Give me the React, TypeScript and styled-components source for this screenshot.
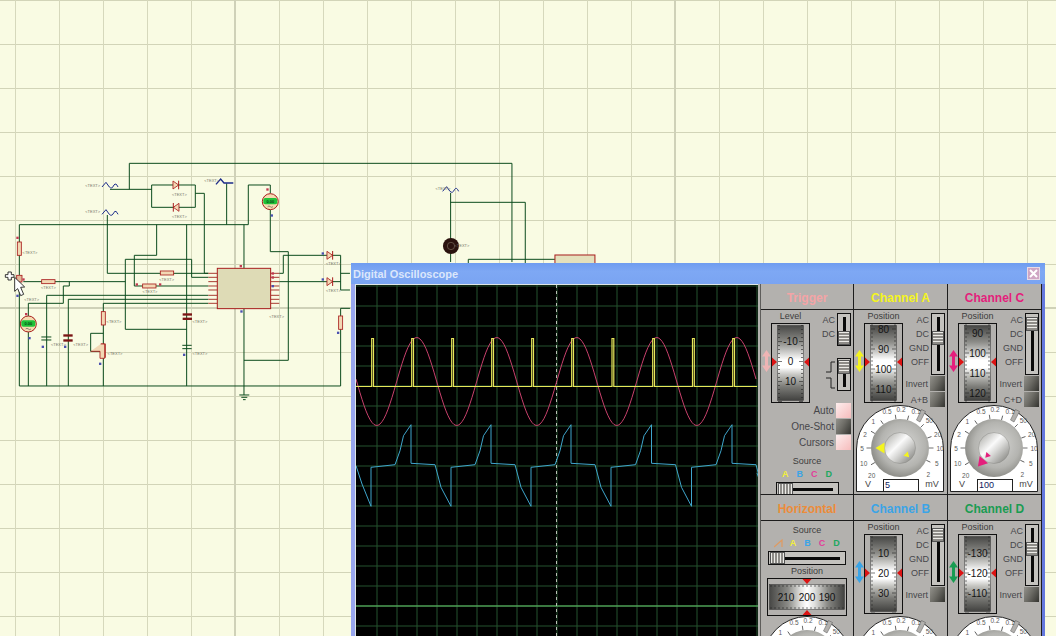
import React from 'react';
import styled, { createGlobalStyle } from 'styled-components';

// === WAVES (page coordinates) ===
const SCREEN_LEFT = 356;
const SCREEN_RIGHT = 757;

const sineWave = () => {
    const pts: string[] = [];
    for (let x = SCREEN_LEFT; x <= SCREEN_RIGHT; x += 2) {
        const y = 382.5 + 44 * Math.cos(((x - 376.7) * 2 * Math.PI) / 80);
        pts.push(`${x},${y.toFixed(1)}`);
    }
    return pts.join(' ');
};

const pulseWave = () => {
    const starts = [371.7, 411.7, 451.7, 491.7, 531.7, 571.7, 612, 652.7, 692.5, 732.7];
    let d = `M${SCREEN_LEFT} 387.5`;
    starts.forEach((x) => {
        d += ` H${x} V339.5 H${x + 1.8} V387.5`;
    });
    return `${d} H${SCREEN_RIGHT}`;
};

const blueWave = () => {
    let d = 'M356 466.7 L362 485 L371 507.3';
    [371, 451, 531, 611.5, 692].forEach((x) => {
        d += ` V468.3 L${x + 24} 465.7 L${x + 29} 451.7 L${x + 32.5} 436.7 L${x + 40} 425.7 V464.3 L${x + 64} 465.7 L${x + 70} 488.3 L${x + 80} 507.3`;
    });
    return d.slice(0, d.lastIndexOf(' L')) + ' L757 474';
};

const range = (from: number, to: number, step: number) => {
    const out: number[] = [];
    for (let v = from; v <= to; v += step) out.push(v);
    return out;
};

// === STYLED COMPONENTS ===
const GlobalStyle = createGlobalStyle`
    html, body { margin: 0; padding: 0; background: #f9fbe3; overflow: hidden; }
    body { font-family: "Liberation Sans", Arial, sans-serif; }
`;
const Desktop = styled.div`
    position: relative; width: 1056px; height: 636px; overflow: hidden;
    background-color: #f9fbe3;
    background-image:
        linear-gradient(#cfd1b8, #cfd1b8), linear-gradient(#cfd1b8, #cfd1b8), linear-gradient(#cfd1b8, #cfd1b8),
        linear-gradient(to right, #d6d8bc 1px, transparent 1px),
        linear-gradient(to bottom, #d2d4b8 1px, transparent 1px);
    background-size: 2px 100%, 2px 100%, 100% 2px, 44px 44px, 44px 44px;
    background-position: 234px 0, 674px 0, 0 307px, 15px 0, 0 0;
    background-repeat: no-repeat, no-repeat, no-repeat, repeat, repeat;
`;
const Schematic = styled.svg` display: block; `;
const Window = styled.div`
    position: absolute; left: 351px; top: 263px; width: 694px; height: 380px;
    display: flex; flex-direction: column;
`;
const TitleBar = styled.div`
    height: 21px; flex: none; display: flex; align-items: center; justify-content: space-between;
    padding: 0 5px 0 2px; box-sizing: border-box;
    background: linear-gradient(#6f9cf0, #7ea8f4 40%, #7aa4f2);
`;
const Title = styled.span` font-size: 11px; font-weight: 700; color: #dbe6fb; `;
const CloseButton = styled.div`
    width: 11px; height: 11px; background: #cfa6c4; border: 1px solid #e9dbe6;
    display: flex; align-items: center; justify-content: center;
`;
const WindowBody = styled.div`
    flex: 1; display: flex; background: #b3b1ae; min-height: 0;
    border-left: 4px solid #98a6ee; border-right: 3px solid #6478de;
`;
const Screen = styled.svg`
    display: block; width: 403px; height: 357px; flex: none; margin-right: 2px;
    background: #000; border-top: 1px solid #dfe6e6; border-left: 1px solid #dfe6e6; box-sizing: border-box;
`;
const Controls = styled.div`
    width: 282px; flex: none; display: grid;
    grid-template-columns: repeat(3, 94px); grid-template-rows: 211px 1fr;
`;
const Section = styled.section`
    display: flex; flex-direction: column; box-sizing: border-box; min-width: 0; overflow: hidden;
    border-right: 1px solid #1d1d1d; border-bottom: 1px solid #1d1d1d;
    &:nth-child(3n + 1) { border-left: 1px solid #5e5d5b; }
`;
const SectionHeader = styled.h3<{ $color: string }>`
    margin: 0; height: 26px; flex: none; box-sizing: border-box; border-bottom: 1px solid #1d1d1d;
    padding-top: 2px;
    display: flex; align-items: center; justify-content: center;
    font-size: 12px; font-weight: 700; color: ${(p) => p.$color};
`;
const SectionBody = styled.div` flex: 1; display: flex; flex-direction: column; `;
const TopRow = styled.div<{ $height: number }>`
    display: flex; height: ${(p) => p.$height}px; flex: none;
`;
const ArrowSlot = styled.div<{ $width: number }>`
    width: ${(p) => p.$width}px; flex: none; display: flex; justify-content: center; padding-top: 40px;
`;
const DrumColumn = styled.div` width: 39px; flex: none; `;
const Caption = styled.div`
    height: 13px; line-height: 13px; font-size: 9px; text-align: center; color: #3c3c3c;
`;
const RightColumn = styled.div` flex: 1; display: flex; flex-direction: column; align-items: flex-end; padding: 3px 2px 0 0; `;
const ModeRow = styled.div` display: flex; gap: 2px; `;
const ModeLabels = styled.div` display: flex; flex-direction: column; align-items: flex-end; `;
const ModeLabel = styled.span`
    height: 14px; line-height: 14px; font-size: 9px; color: #46464a;
`;
const SliderFrame = styled.div<{ $height: number }>`
    position: relative; width: 14px; height: ${(p) => p.$height}px; box-sizing: border-box;
    border: 1px solid #111; background: #c4c2be; display: flex; justify-content: center;
    &::before { content: ''; width: 3px; margin: 3px 0; background: #0a0a0a; }
`;
const SliderThumb = styled.div<{ $top: number }>`
    position: absolute; left: 0; top: ${(p) => p.$top}px; width: 12px; height: 14px; box-sizing: border-box;
    border: 1px solid #555;
    background: repeating-linear-gradient(#ecebe7 0 1px, #8e8c88 1px 3px);
`;
const WideSlider = styled.div<{ $width: number }>`
    position: relative; width: ${(p) => p.$width}px; height: 14px; box-sizing: border-box;
    border: 1px solid #111; background: #c4c2be; display: flex; align-items: center;
    &::before { content: ''; flex: 1; height: 3px; margin: 0 5px; background: #0a0a0a; }
`;
const WideThumb = styled.div`
    position: absolute; left: 1px; top: 0; width: 15px; height: 12px; box-sizing: border-box;
    border: 1px solid #555;
    background: repeating-linear-gradient(90deg, #ecebe7 0 1px, #8e8c88 1px 3px);
`;
const ButtonRow = styled.div<{ $gap?: number }>`
    display: flex; align-items: center; justify-content: flex-end; gap: 2px;
    margin-top: ${(p) => p.$gap ?? 1}px; height: 15px;
`;
const ButtonLabel = styled.span` font-size: 9px; color: #46464a; `;
const ActionLabel = styled.span` font-size: 10px; color: #46464a; `;
const SquareButton = styled.div<{ $lit?: boolean }>`
    width: 15px; height: 15px; flex: none;
    background: ${(p) =>
        p.$lit
            ? 'linear-gradient(135deg, #fdeeee, #f6bcbc)'
            : 'linear-gradient(120deg, #93928c, #6d6c66 45%, #33332f)'};
`;
const SideStack = styled.div` display: flex; flex-direction: column; padding-right: 2px; `;
const Stepper = styled.div` display: flex; align-items: center; gap: 1px; margin-top: 12px; `;
const Centered = styled.div<{ $top?: number }>`
    display: flex; flex-direction: column; align-items: center; margin-top: ${(p) => p.$top ?? 0}px;
`;
const SourceLetters = styled.div` display: flex; align-items: center; gap: 6.5px; height: 10px; margin: 1px 0 3px; `;
const SourceLetter = styled.span<{ $color: string }>` font-size: 9px; font-weight: 700; color: ${(p) => p.$color}; width: 8px; text-align: center; `;
const DialWrap = styled.div`
    position: relative; width: 88px; height: 87px; flex: none; margin-left: 2px;
`;
const DialInput = styled.div`
    position: absolute; left: 27px; bottom: 0; width: 36px; height: 13px; box-sizing: border-box;
    background: #fff; border: 1px solid #222; padding-left: 1px;
    font-size: 9px; line-height: 11px; color: #101a60;
`;

// === DRAWN PARTS ===
const DoubleArrow: React.FC<{ color: string }> = ({ color }) => (
    <svg width="9" height="22" viewBox="0 0 9 22">
        <path d="M4.5 0 9 6.5H6V15.5H9L4.5 22 0 15.5H3V6.5H0Z" fill={color} />
    </svg>
);

const Drum: React.FC<{ labels: string[]; first: number; id: string }> = ({ labels, first, id }) => {
    const ticks = range(first - 16, 40, 4).filter((y) => y > -38);
    return (
        <svg width="39" height="80" viewBox="0 0 39 80" style={{ display: 'block' }}>
            <defs>
                <linearGradient id={id} x1="0" y1="0" x2="0" y2="1">
                    <stop offset="0" stopColor="#474745" />
                    <stop offset="0.22" stopColor="#8c8c88" />
                    <stop offset="0.38" stopColor="#d8d8d6" />
                    <stop offset="0.46" stopColor="#fff" />
                    <stop offset="0.56" stopColor="#fff" />
                    <stop offset="0.66" stopColor="#c4c4c0" />
                    <stop offset="0.82" stopColor="#7a7a76" />
                    <stop offset="1" stopColor="#41413f" />
                </linearGradient>
            </defs>
            <rect x="0.5" y="0.5" width="38" height="79" fill="#b3b1ae" stroke="#111" />
            <rect x="6.5" y="2.5" width="26" height="75" fill={`url(#${id})`} stroke="#333" strokeWidth="0.5" />
            {ticks.map((t) => {
                const major = (t - first) % 20 === 0;
                return (
                    <g key={t} stroke="#222" strokeWidth="0.6">
                        <line x1="7" x2={major ? 11 : 9} y1={39 + t} y2={39 + t} />
                        <line x1={major ? 28 : 30} x2="32" y1={39 + t} y2={39 + t} />
                    </g>
                );
            })}
            {labels.map((l, i) => (
                <text key={l} x="19.5" y={39 + first + i * 20 + 3.5} fontSize="10" textAnchor="middle" fill="#151515"
                    fontFamily="Liberation Sans, sans-serif">{l}</text>
            ))}
            <path d="M1 34.5 6 39 1 43.5Z M38 34.5 33 39 38 43.5Z" fill="#dc1414" />
        </svg>
    );
};

const WideDrum: React.FC = () => (
    <svg width="80" height="38" viewBox="0 0 80 38" style={{ display: 'block' }}>
        <defs>
            <linearGradient id="wideDrum" x1="0" y1="0" x2="1" y2="0">
                <stop offset="0" stopColor="#474745" />
                <stop offset="0.25" stopColor="#8c8c88" />
                <stop offset="0.42" stopColor="#e4e4e2" />
                <stop offset="0.5" stopColor="#fff" />
                <stop offset="0.6" stopColor="#e0e0de" />
                <stop offset="0.78" stopColor="#888884" />
                <stop offset="1" stopColor="#41413f" />
            </linearGradient>
        </defs>
        <rect x="0.5" y="0.5" width="79" height="37" fill="#b3b1ae" stroke="#111" />
        <rect x="2.5" y="6.5" width="75" height="25" fill="url(#wideDrum)" stroke="#333" strokeWidth="0.5" />
        {range(4, 76, 4).map((x) => (
            <g key={x} stroke="#222" strokeWidth="0.6">
                <line x1={x} x2={x} y1="7" y2="9" />
                <line x1={x} x2={x} y1="29" y2="31" />
            </g>
        ))}
        {[['210', 19], ['200', 40], ['190', 60]].map(([l, x]) => (
            <text key={l} x={x} y="23" fontSize="10" textAnchor="middle" fill="#111"
                fontFamily="Liberation Sans, sans-serif">{l}</text>
        ))}
        <path d="M35.5 1 44.5 1 40 6Z M35.5 37 44.5 37 40 32Z" fill="#dc1414" />
    </svg>
);

const DIAL_MARKS: [string, number, number][] = [
    ['0.5', -13, -36.7], ['0.2', 1, -39], ['0.1', 16, -36.7], ['50', 29.3, -27.3], ['20', 37.7, -13.3],
    ['10', 40, 0], ['5', 36.7, 15], ['2', 28.3, 26.7], ['1', -26.7, -26.7], ['2', -35, -13.3],
    ['5', -38, 0], ['10', -36.3, 15], ['20', -28.3, 27.3],
];
const DIAL_TICKS = [-120, -90, -60, -35, -8, 15, 45, 70, 90, 115];

// angles run clockwise from straight up
const Dial: React.FC<{ id: string; color?: string; angle?: number; fine?: number; value?: string }> = ({
    id, color, angle = 270, fine = 135, value,
}) => (
    <DialWrap>
        <svg width="88" height="87" viewBox="0 0 88 87" style={{ display: 'block' }} fontFamily="Liberation Sans, sans-serif">
            <defs>
                <radialGradient id={`${id}-body`} cx="0.55" cy="0.45" r="0.6">
                    <stop offset="0" stopColor="#d8d8d6" />
                    <stop offset="0.65" stopColor="#b4b4b0" />
                    <stop offset="1" stopColor="#84847f" />
                </radialGradient>
                <linearGradient id={`${id}-cap`} x1="0.1" y1="0.1" x2="0.9" y2="0.9">
                    <stop offset="0" stopColor="#b8b8b4" />
                    <stop offset="0.4" stopColor="#fafafa" />
                    <stop offset="0.6" stopColor="#d8d8d6" />
                    <stop offset="1" stopColor="#8c8c88" />
                </linearGradient>
            </defs>
            <path d="M0.5 86.5V44A43.5 43.5 0 0 1 87.5 44V86.5Z" fill="#fff" stroke="#222" />
            <path d="M65.5 4.5 69.5 6.5 64 17 60.5 15Z" fill="#b3b1ae" stroke="#555" strokeWidth="0.5" />
            <line x1="27.5" y1="74" x2="27.5" y2="86" stroke="#222" />
            <line x1="62.5" y1="74" x2="62.5" y2="86" stroke="#222" />
            {DIAL_TICKS.map((a) => (
                <line key={a} x1="44" x2="44" y1="9.5" y2="14" stroke="#333" strokeWidth="0.7" transform={`rotate(${a} 44 43)`} />
            ))}
            {DIAL_MARKS.map(([l, dx, dy]) => (
                <text key={`${l}${dx}`} x={44 + dx} y={43 + dy + 2.5} fontSize="6.5" textAnchor="middle" fill="#5a5a5a">{l}</text>
            ))}
            <text x="12" y="82" fontSize="9" textAnchor="middle" fill="#444">V</text>
            <text x="76" y="82" fontSize="9" textAnchor="middle" fill="#444">mV</text>
            <circle cx="44" cy="43" r="29" fill={`url(#${id}-body)`} />
            <circle cx="44" cy="43" r="15.5" fill={`url(#${id}-cap)`} stroke="#8a8a86" strokeWidth="0.5" />
            {color && (
                <>
                    <path d="M44 18.5 49.5 27.5H38.5Z" fill={color} transform={`rotate(${angle} 44 43)`} />
                    <path d="M44 30 47 35H41Z" fill={color} transform={`rotate(${fine} 44 43)`} />
                </>
            )}
        </svg>
        {value && <DialInput>{value}</DialInput>}
    </DialWrap>
);

// === PANELS ===
type ChannelProps = {
    title: string;
    color: string;
    labels: string[];
    first: number;
    stop: number;
    buttons: string[];
    id: string;
    angle?: number;
    fine?: number;
    value?: string;
};

const Channel: React.FC<ChannelProps> = ({ title, color, labels, first, stop, buttons, id, angle, fine, value }) => (
    <Section>
        <SectionHeader $color={color}>{title}</SectionHeader>
        <SectionBody>
            <TopRow $height={95}>
                <ArrowSlot $width={10}><DoubleArrow color={color} /></ArrowSlot>
                <DrumColumn>
                    <Caption>Position</Caption>
                    <Drum id={id} labels={labels} first={first} />
                </DrumColumn>
                <RightColumn>
                    <ModeRow>
                        <ModeLabels>
                            {['AC', 'DC', 'GND', 'OFF'].map((m) => <ModeLabel key={m}>{m}</ModeLabel>)}
                        </ModeLabels>
                        <SliderFrame $height={62}><SliderThumb $top={3 + stop * 14} /></SliderFrame>
                    </ModeRow>
                    {buttons.map((b) => (
                        <ButtonRow key={b}>
                            <ButtonLabel>{b}</ButtonLabel>
                            <SquareButton />
                        </ButtonRow>
                    ))}
                </RightColumn>
            </TopRow>
            <Dial id={`${id}-dial`} color={value ? color : undefined} angle={angle} fine={fine} value={value} />
        </SectionBody>
    </Section>
);

const TriggerPanel: React.FC = () => (
    <Section>
        <SectionHeader $color="#f4a4a6">Trigger</SectionHeader>
        <SectionBody>
            <TopRow $height={93}>
                <ArrowSlot $width={10}><DoubleArrow color="#eeb4b4" /></ArrowSlot>
                <DrumColumn>
                    <Caption>Level</Caption>
                    <Drum id="level" labels={['-10', '0', '10']} first={-20.5} />
                </DrumColumn>
                <RightColumn>
                    <ModeRow>
                        <ModeLabels>
                            <ModeLabel>AC</ModeLabel>
                            <ModeLabel>DC</ModeLabel>
                        </ModeLabels>
                        <SliderFrame $height={33}><SliderThumb $top={17} /></SliderFrame>
                    </ModeRow>
                    <Stepper>
                        <svg width="12" height="28" viewBox="0 0 12 28">
                            <path d="M11 1H7V11H2M11 27H7V17H2" fill="none" stroke="#222" strokeWidth="1" />
                        </svg>
                        <SliderFrame $height={33}><SliderThumb $top={1} /></SliderFrame>
                    </Stepper>
                </RightColumn>
            </TopRow>
            <SideStack>
                <ButtonRow $gap={0}><ActionLabel>Auto</ActionLabel><SquareButton $lit /></ButtonRow>
                <ButtonRow><ActionLabel>One-Shot</ActionLabel><SquareButton /></ButtonRow>
                <ButtonRow><ActionLabel>Cursors</ActionLabel><SquareButton $lit /></ButtonRow>
            </SideStack>
            <Centered $top={5}>
                <Caption>Source</Caption>
                <SourceLetters>
                    <SourceLetter $color="#f2ee3c">A</SourceLetter>
                    <SourceLetter $color="#3ba4e6">B</SourceLetter>
                    <SourceLetter $color="#e0409a">C</SourceLetter>
                    <SourceLetter $color="#20a860">D</SourceLetter>
                </SourceLetters>
                <WideSlider $width={63}><WideThumb /></WideSlider>
            </Centered>
        </SectionBody>
    </Section>
);

const HorizontalPanel: React.FC = () => (
    <Section>
        <SectionHeader $color="#ec8c3a">Horizontal</SectionHeader>
        <SectionBody>
            <Centered $top={3}>
                <Caption>Source</Caption>
                <SourceLetters>
                    <svg width="9" height="9" viewBox="0 0 9 9">
                        <path d="M0 8 8 1V8" fill="none" stroke="#e09a60" strokeWidth="1.2" />
                    </svg>
                    <SourceLetter $color="#f2ee3c">A</SourceLetter>
                    <SourceLetter $color="#3ba4e6">B</SourceLetter>
                    <SourceLetter $color="#e0409a">C</SourceLetter>
                    <SourceLetter $color="#20a860">D</SourceLetter>
                </SourceLetters>
                <WideSlider $width={78}><WideThumb /></WideSlider>
                <Caption>Position</Caption>
                <WideDrum />
            </Centered>
            <Dial id="timebase" />
        </SectionBody>
    </Section>
);

const Source: React.FC<{ x: number; y: number; dc?: boolean }> = ({ x, y, dc }) => (
    <path
        d={dc ? `M${x - 24} ${y + 8}L${x - 10} ${y - 8}L${x} ${y + 4}H${x + 28}` : `M${x - 24} ${y + 6}L${x - 12} ${y - 8}L${x - 2} ${y + 6}Q${x + 6} ${y + 14} ${x + 12} ${y}Q${x + 18} ${y - 8} ${x + 24} ${y + 6}`}
        fill="none" stroke="#1a2a8a" strokeWidth={dc ? 4 : 3}
    />
);

// Traced from a 3x view, hence the scale on the group
const WIRES = [
    'M388 118V40H1536V336', 'M330 118H455', 'M455 105H586V172H455Z', 'M586 130H613V370H625',
    'M322 195V370H625', 'M58 224H745V105H811V130', 'M732 224V355', 'M58 224V375', 'M58 395V708H1022V475H1050',
    'M470 224V316H403V408H625', 'M560 224V708', 'M680 100V224', 'M376 328H575V382H625', 'M376 328V538H560',
    'M70 395H376', 'M208 395V408H190V460H85V708', 'M140 436H625', 'M140 436V708', 'M205 448H625', 'M205 448V708',
    'M310 460H625', 'M310 460V708', 'M272 550H310', 'M272 550V604H300', 'M838 370H850V316H1022V420H1050',
    'M838 395H1022', 'M1022 370H1050', 'M811 180V305H865V631H732', 'M732 476V735',
    'M1352 129V336', 'M1352 157H1576V340', 'M1405 345V328H1665',
];
const PIN_ROWS = [370, 382, 395, 408, 420, 436, 448, 460];
const RESISTORS_H = [[145, 395], [501, 369], [448, 408]];
const RESISTORS_V = [[58, 296], [310, 505], [1022, 518], [310, 602]];
const DIODES = [[528, 105, 1], [528, 172, -1], [990, 316, 1], [990, 395, 1]];
const TEXT_TAGS = [
    [278, 110], [278, 188], [635, 95], [538, 137], [538, 203], [90, 313], [145, 418], [95, 452], [500, 392],
    [450, 430], [342, 520], [175, 587], [242, 587], [345, 614], [600, 520], [600, 614], [830, 503], [1000, 346],
    [1000, 427], [1329, 120], [1386, 291],
];
const RED_PINS = [[52, 263], [70, 388], [410, 403], [480, 403], [818, 382], [818, 370], [802, 118], [78, 492], [722, 348]];
const BLUE_PINS = [[52, 437], [128, 590], [195, 590], [300, 641], [552, 614], [88, 564], [815, 196], [818, 408], [724, 484], [968, 310], [968, 388], [1014, 548]];

const Circuit: React.FC = () => (
    <Schematic width="1056" height="636" viewBox="0 0 1056 636">
        <g transform="translate(0 150) scale(0.3333)" fontFamily="Liberation Sans, sans-serif">
            <g fill="none" stroke="#0b4a1c" strokeWidth="3">
                {WIRES.map((d) => <path key={d} d={d} />)}
            </g>
            <g stroke="#a83a30" strokeWidth="3">
                {PIN_ROWS.map((y) => (
                    <g key={y}>
                        <line x1="625" x2="652" y1={y} y2={y} />
                        <line x1="812" x2="838" y1={y} y2={y} />
                    </g>
                ))}
            </g>
            <rect x="652" y="355" width="160" height="121" fill="#dedbb6" stroke="#a81c1c" strokeWidth="3" />
            <rect x="1665" y="315" width="120" height="40" fill="#e4e0bc" stroke="#a81c1c" strokeWidth="3" />
            {RESISTORS_H.map(([x, y]) => <rect key={x} x={x - 20} y={y - 6} width="40" height="12" fill="#f2d8b4" stroke="#a81c1c" strokeWidth="2.5" />)}
            {RESISTORS_V.map(([x, y]) => <rect key={y} x={x - 6} y={y - 20} width="12" height="40" fill="#f2d8b4" stroke="#a81c1c" strokeWidth="2.5" />)}
            {DIODES.map(([x, y, dir]) => (
                <g key={`${x}${y}`} transform={`translate(${x} ${y}) scale(${dir} 1)`}>
                    <path d="M-9 -12V12L8 0Z" fill="#f2d8b4" stroke="#a81c1c" strokeWidth="2.5" />
                    <line x1="8" x2="8" y1="-13" y2="13" stroke="#a81c1c" strokeWidth="3" />
                </g>
            ))}
            {[[811, 155], [85, 522]].map(([x, y]) => (
                <g key={x}>
                    <circle cx={x} cy={y} r="24" fill="#f4dcb0" stroke="#a81c1c" strokeWidth="3" />
                    <rect x={x - 21} y={y - 11} width="42" height="19" rx="6" fill="#1fc238" />
                    <text x={x} y={y + 3} fontSize="12" fontWeight="700" textAnchor="middle" fill="#0a4a16">0.00</text>
                    <path d={`M${x - 8} ${y + 15}q4 -4 8 0t8 0`} fill="none" stroke="#555" strokeWidth="2" />
                </g>
            ))}
            <g fill="#7a1414">
                <rect x="548" y="490" width="28" height="7" />
                <rect x="548" y="503" width="28" height="7" />
                <rect x="190" y="553" width="28" height="7" />
                <rect x="190" y="568" width="28" height="7" />
            </g>
            <g stroke="#0b4a1c" strokeWidth="3">
                <line x1="124" x2="154" y1="561" y2="561" />
                <line x1="124" x2="154" y1="570" y2="570" />
                <line x1="547" x2="575" y1="586" y2="586" />
                <line x1="547" x2="575" y1="596" y2="596" />
                <line x1="718" x2="748" y1="735" y2="735" />
                <line x1="724" x2="742" y1="742" y2="742" />
                <line x1="729" x2="737" y1="749" y2="749" />
            </g>
            <path d="M272 604H300V625H314V582H302" fill="#f2d8b4" stroke="#a81c1c" strokeWidth="2.5" />
            <rect x="50" y="376" width="16" height="20" fill="#e2b89a" stroke="#a81c1c" strokeWidth="2.5" />
            <Source x={330} y={105} />
            <Source x={330} y={187} />
            <Source x={672} y={95} dc />
            <Source x={1352} y={118} />
            <circle cx="1353" cy="288" r="24" fill="#2a120e" />
            <circle cx="1353" cy="288" r="11" fill="none" stroke="#7a6a5a" strokeWidth="2" />
            {RED_PINS.map(([x, y]) => <rect key={`${x}${y}`} x={x - 3} y={y - 3} width="7" height="7" fill="#c03a50" />)}
            {BLUE_PINS.map(([x, y]) => <rect key={`${x}${y}`} x={x - 3} y={y - 3} width="7" height="7" fill="#4a50b0" />)}
            {TEXT_TAGS.map(([x, y]) => (
                <text key={`${x}${y}`} x={x} y={y} fontSize="12" textAnchor="middle" fill="#77776a">{'<TEXT>'}</text>
            ))}
            {/* pointer */}
            <path d="M24 366h10v8h8v8h-8v8H24v-8H16v-8h8Z" fill="#fff" stroke="#111" strokeWidth="2.5" />
            <path d="M44 382V424L53 416 62 437 71 433 62 412 74 411Z" fill="#fff" stroke="#111" strokeWidth="2.5" />
        </g>
    </Schematic>
);

const Scope: React.FC = () => (
    <Screen viewBox="356 286 402 356" preserveAspectRatio="xMinYMin">
        <g stroke="#24532f" strokeWidth="1">
            {range(377, 757, 20).map((x) => <line key={x} x1={x} x2={x} y1="286" y2="640" />)}
            {range(287, 640, 20).map((y) => <line key={y} x1="356" x2="758" y1={y} y2={y} />)}
        </g>
        <line x1="356" x2="758" y1="607" y2="607" stroke="#63c86a" strokeWidth="1" />
        <line x1="556.5" x2="556.5" y1="286" y2="640" stroke="#b8bcb4" strokeWidth="1" strokeDasharray="3 3" />
        <polyline points={sineWave()} fill="none" stroke="#c8406c" strokeWidth="1" />
        <path d={pulseWave()} fill="none" stroke="#e6e65a" strokeWidth="1.2" />
        <path d={blueWave()} fill="none" stroke="#3fa6cc" strokeWidth="1" />
    </Screen>
);

const App: React.FC = () => (
    <>
        <GlobalStyle />
        <Desktop>
            <Circuit />
            <Window>
                <TitleBar>
                    <Title>Digital Oscilloscope</Title>
                    <CloseButton>
                        <svg width="9" height="9" viewBox="0 0 9 9">
                            <path d="M1 1 8 8M8 1 1 8" stroke="#fff" strokeWidth="2" />
                        </svg>
                    </CloseButton>
                </TitleBar>
                <WindowBody>
                    <Scope />
                    <Controls>
                        <TriggerPanel />
                        <Channel title="Channel A" color="#f4f41e" id="chA" labels={['80', '90', '100', '110']} first={-33}
                            stop={1} buttons={['Invert', 'A+B']} angle={270} fine={135} value="5" />
                        <Channel title="Channel C" color="#e41f7c" id="chC" labels={['90', '100', '110', '120']} first={-29}
                            stop={0} buttons={['Invert', 'C+D']} angle={221} fine={222} value="100" />
                        <HorizontalPanel />
                        <Channel title="Channel B" color="#3ba4e6" id="chB" labels={['10', '20', '30']} first={-20}
                            stop={0} buttons={['Invert']} />
                        <Channel title="Channel D" color="#1a9c52" id="chD" labels={['-130', '-120', '-110']} first={-20}
                            stop={1} buttons={['Invert']} />
                    </Controls>
                </WindowBody>
            </Window>
        </Desktop>
    </>
);

export default App;
